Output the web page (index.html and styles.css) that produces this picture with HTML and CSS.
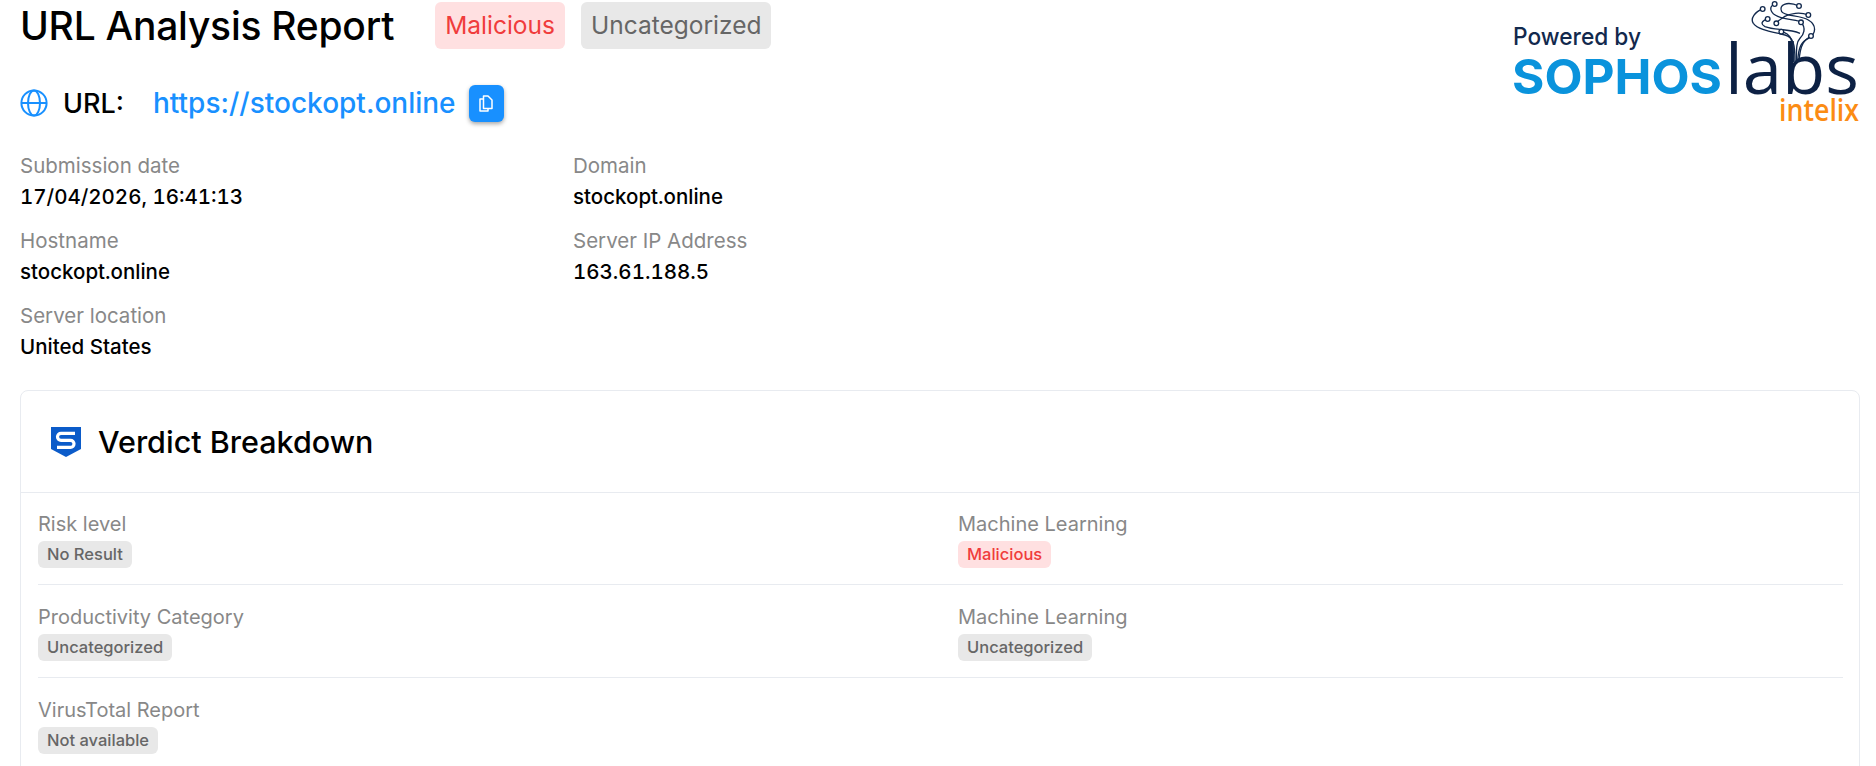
FILE: index.html
```html
<!DOCTYPE html>
<html lang="en">
<head>
    <meta charset="UTF-8">
    <meta name="viewport" content="width=device-width, initial-scale=1.0">
    <title>URL Analysis Report</title>
    <link rel="stylesheet" href="styles.css">
</head>
<body>
    <header class="report-header">
        <div class="header-left">
            <div class="title-row">
                <h1>URL Analysis Report</h1>
                <span class="tag tag-red">Malicious</span>
                <span class="tag tag-grey">Uncategorized</span>
            </div>
            <div class="url-row">
                <svg class="globe" viewBox="0 0 28 28" fill="none" stroke="#1890ff" stroke-width="2">
                    <circle cx="14" cy="14" r="12.6"/>
                    <ellipse cx="14" cy="14" rx="6" ry="12.6"/>
                    <path d="M2 14h24"/>
                </svg>
                <span class="url-label">URL:</span>
                <a class="url-link" href="#">https://stockopt.online</a>
                <button class="copy-btn" aria-label="Copy">
                    <svg viewBox="0 0 14 17" fill="none" stroke="#fff" stroke-width="1.5" stroke-linejoin="round">
                        <path d="M4.5 1H9l4 4v8.500H4.500z"/>
                        <path d="M4.500 4H1v12h8v-2.500"/>
                    </svg>
                </button>
            </div>
        </div>
        <svg class="logo" viewBox="1490 0 370 128">
            <text x="1513" y="45" class="logo-powered" textLength="128" lengthAdjust="spacingAndGlyphs">Powered by</text>
            <text x="1512" y="94" class="logo-sophos" textLength="210" lengthAdjust="spacingAndGlyphs">SOPHOS</text>
            <text x="1725" y="94" class="logo-labs" textLength="134" lengthAdjust="spacingAndGlyphs">labs</text>
            <text x="1779" y="121" class="logo-intelix" textLength="80" lengthAdjust="spacingAndGlyphs">intelix</text>
            <g transform="translate(1745 0) scale(0.3333)">
                <g fill="none" stroke="#12294d" stroke-width="4">
                    <path d="M53 27C30 35 15 55 25 70C40 90 80 95 120 105C145 112 150 130 150 186"/>
                    <path d="M89 12C70 20 75 40 100 50C130 62 160 58 168 67"/>
                    <path d="M162 18C125 2 100 15 110 35C120 50 165 45 190 60C215 75 215 100 190 115C170 125 160 140 158 186"/>
                    <path d="M190 45C165 35 135 40 118 50C112 55 100 60 94 70"/>
                    <path d="M168 67C185 85 175 105 165 115C155 125 154 140 154 186"/>
                    <path d="M198 108C180 118 165 130 162 186"/>
                    <path d="M109 95C135 100 146 115 146 186"/>
                    <path d="M68 57C50 62 45 72 60 80C90 92 130 85 165 100"/>
                </g>
                <g fill="#fff" stroke="#12294d" stroke-width="4">
                    <circle cx="53" cy="27" r="7"/>
                    <circle cx="89" cy="12" r="7"/>
                    <circle cx="162" cy="18" r="7"/>
                    <circle cx="190" cy="45" r="7"/>
                    <circle cx="168" cy="67" r="7"/>
                    <circle cx="198" cy="108" r="7"/>
                    <circle cx="109" cy="95" r="7"/>
                    <circle cx="94" cy="70" r="7"/>
                    <circle cx="68" cy="57" r="7"/>
                </g>
            </g>
        </svg>
    </header>

    <section class="details">
        <div class="detail"><div class="detail-label">Submission date</div><div class="detail-value">17/04/2026, 16:41:13</div></div>
        <div class="detail"><div class="detail-label">Domain</div><div class="detail-value">stockopt.online</div></div>
        <div class="detail"><div class="detail-label">Hostname</div><div class="detail-value">stockopt.online</div></div>
        <div class="detail"><div class="detail-label">Server IP Address</div><div class="detail-value">163.61.188.5</div></div>
        <div class="detail"><div class="detail-label">Server location</div><div class="detail-value">United States</div></div>
    </section>

    <section class="card">
        <div class="card-head">
            <svg class="shield" viewBox="0 0 30 30">
                <path d="M0 0h30v22l-15 8L0 22z" fill="#0b5bc9"/>
                <path d="M24 6.300H10a3.500 3.500 0 0 0 0 7h9.500a3.500 3.500 0 0 1 0 7H6" fill="none" stroke="#fff" stroke-width="3.200"/>
            </svg>
            <h2>Verdict Breakdown</h2>
        </div>
        <div class="card-body">
            <div class="verdict-row">
                <div><div class="detail-label">Risk level</div><span class="chip chip-grey">No Result</span></div>
                <div><div class="detail-label">Machine Learning</div><span class="chip chip-red">Malicious</span></div>
            </div>
            <div class="verdict-row">
                <div><div class="detail-label">Productivity Category</div><span class="chip chip-grey">Uncategorized</span></div>
                <div><div class="detail-label">Machine Learning</div><span class="chip chip-grey">Uncategorized</span></div>
            </div>
            <div class="verdict-row">
                <div><div class="detail-label">VirusTotal Report</div><span class="chip chip-grey">Not available</span></div>
            </div>
        </div>
    </section>
</body>
</html>
```
FILE: styles.css
```css
html, body {
    height: 100%;
    overflow: hidden;
}
body {
    font-family: Inter, "Noto Sans", sans-serif;
    margin: 0;
    padding: 0 16px 0 20px;
    background-color: #fff;
    color: #000;
}
.report-header {
    display: flex;
    justify-content: space-between;
    align-items: flex-start;
    height: 153px;
}
.title-row {
    display: flex;
    align-items: center;
    padding-top: 2px;
}
.title-row h1 {
    margin: 0 41px 0 0;
    font-size: 39px;
    font-weight: 500;
    letter-spacing: -0.25px;
}
.tag {
    display: block;
    height: 47px;
    line-height: 47px;
    padding: 0 10px;
    border-radius: 6px;
    font-size: 24.5px;
    margin-right: 16px;
}
.tag-red {
    background-color: #ffe0e1;
    color: #f03c3c;
}
.tag-grey {
    background-color: #e8e8e8;
    color: #666;
}
.url-row {
    display: flex;
    align-items: center;
    margin-top: 35px;
    height: 38px;
}
.globe {
    width: 28px;
    height: 28px;
    margin-right: 15px;
}
.url-label {
    font-size: 27px;
    width: 90px;
    font-weight: 500;
}
.url-link {
    font-size: 28px;
    font-weight: 500;
    color: #1890ff;
    text-decoration: none;
}
.copy-btn {
    width: 35px;
    height: 37px;
    margin-left: 13px;
    padding: 0;
    border: none;
    border-radius: 6px;
    background-color: #1890ff;
    box-shadow: 0 2px 4px rgba(0, 0, 0, 0.35);
    display: flex;
    align-items: center;
    justify-content: center;
}
.copy-btn svg {
    width: 14px;
    height: 17px;
}
.logo {
    width: 370px;
    height: 128px;
    flex-shrink: 0;
}
.logo-powered {
    font-family: Inter, sans-serif;
    font-size: 24px;
    font-weight: 500;
    fill: #12294d;
}
.logo-sophos {
    font-family: Inter, sans-serif;
    font-size: 48px;
    font-weight: 700;
    fill: #0a93dc;
}
.logo-labs {
    font-family: "Open Sans", sans-serif;
    font-size: 70px;
    font-weight: 500;
    fill: #0d2144;
}
.logo-intelix {
    font-family: "Open Sans", sans-serif;
    font-size: 30px;
    font-weight: 600;
    fill: #fb8c14;
}
.details {
    display: grid;
    grid-template-columns: 553px 1fr;
    row-gap: 13px;
}
.detail-label {
    font-size: 20.5px;
    line-height: 25px;
    color: #888;
}
.detail-value {
    font-size: 20.5px;
    line-height: 37px;
    font-weight: 500;
    font-variant-numeric: tabular-nums;
}
.card {
    margin-top: 25px;
    border: 1px solid #e8ebf0;
    border-radius: 8px;
    height: 600px;
}
.card-head {
    display: flex;
    align-items: center;
    height: 101px;
    padding-left: 30px;
    border-bottom: 1px solid #e8ebf0;
}
.shield {
    width: 30px;
    height: 30px;
    margin-right: 17px;
}
.card-head h2 {
    margin: 0;
    font-size: 30.5px;
    font-weight: 500;
}
.card-body {
    margin-top: -1px;
    padding: 0 16px 0 17px;
}
.verdict-row {
    display: grid;
    grid-template-columns: 920px 1fr;
    height: 73px;
    padding-top: 19px;
    border-bottom: 1px solid #e8ebf0;
}
.verdict-row:last-child {
    border-bottom: none;
}
.verdict-row .detail-label {
    font-size: 20px;
    line-height: 26px;
    margin-bottom: 4px;
}
.chip {
    display: inline-block;
    height: 27px;
    line-height: 27px;
    padding: 0 9px;
    border-radius: 6px;
    font-size: 16.5px;
    font-weight: 500;
}
.chip-grey {
    background-color: #e8e8e8;
    color: #666;
}
.chip-red {
    background-color: #ffe0e1;
    color: #f03c3c;
}
```
